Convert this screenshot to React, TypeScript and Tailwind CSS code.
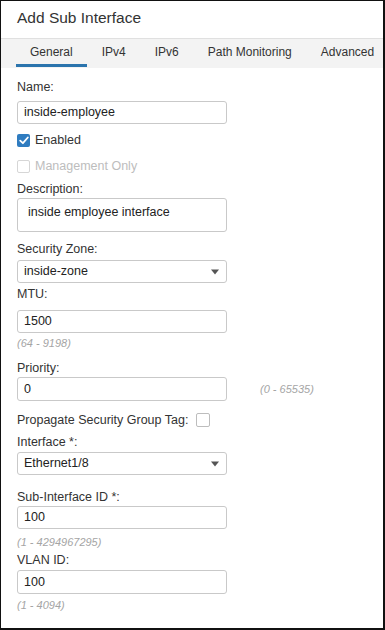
import React from "react";

const Label = ({ children, className = "" }: { children: React.ReactNode; className?: string }) => (
  <div className={`h-[16px] leading-[16px] text-[12.5px] text-[#333] ${className}`}>{children}</div>
);

const Input = ({ value, className = "" }: { value: string; className?: string }) => (
  <div
    className={`w-[210px] h-[23px] border border-[#c9c9c9] rounded-[3px] bg-white flex items-center px-[6px] text-[12.5px] text-[#222] ${className}`}
  >
    {value}
  </div>
);

const Select = ({ value, className = "" }: { value: string; className?: string }) => (
  <div
    className={`w-[210px] h-[23px] border border-[#c9c9c9] rounded-[3px] bg-white flex items-center justify-between pl-[6px] pr-[6px] text-[12.5px] text-[#222] ${className}`}
  >
    <span>{value}</span>
    <svg width="8" height="6" viewBox="0 0 8 6" className="mr-[1px]">
      <path d="M0 0.5 L8 0.5 L4 5.5 Z" fill="#555" />
    </svg>
  </div>
);

const Hint = ({ children, className = "" }: { children: React.ReactNode; className?: string }) => (
  <div className={`h-[14px] leading-[14px] text-[11px] italic text-[#a5a5a5] ${className}`}>{children}</div>
);

const tabs = ["General", "IPv4", "IPv6", "Path Monitoring", "Advanced"];

export default function App() {
  return (
    <div
      className="w-[385px] h-[630px] bg-white border-l border-t border-r-2 border-b-2 border-[#111] overflow-hidden flex flex-col"
      style={{ fontFamily: "'Liberation Sans', Arial, Helvetica, sans-serif" }}
    >
      <div className="h-[37px] flex items-center pl-[16px] pb-[3px] text-[15.5px] text-[#333]">Add Sub Interface</div>
      <div className="h-[30px] bg-[#f3f3f3] border-t border-[#e0e0e0] flex pl-[15px] gap-[1px] whitespace-nowrap">
        {tabs.map((t, i) => (
          <div
            key={t}
            className={`px-[14px] flex items-center text-[12px] text-[#333] mb-[1px] border-b-[3px] ${
              i === 0 ? "border-[#2b74ad]" : "border-transparent"
            }`}
          >
            {t}
          </div>
        ))}
      </div>

      <div className="flex flex-col pl-[16px]">
        <Label className="mt-[11px]">Name:</Label>
        <Input value="inside-employee" className="mt-[6px]" />

        <div className="mt-[8px] h-[16px] flex items-center gap-[5px]">
          <div className="w-[13px] h-[13px] rounded-[2px] bg-[#2f7cc0] flex items-center justify-center">
            <svg width="10" height="9" viewBox="0 0 10 9">
              <path d="M1.2 4.6 L3.9 7.2 L8.8 1.5" stroke="white" strokeWidth="1.8" fill="none" strokeLinecap="round" strokeLinejoin="round" />
            </svg>
          </div>
          <span className="text-[12.5px] text-[#333]">Enabled</span>
        </div>

        <div className="mt-[10px] h-[16px] flex items-center gap-[5px]">
          <div className="w-[13px] h-[13px] rounded-[2px] border border-[#d6d6d6] bg-white" />
          <span className="text-[12.5px] text-[#bdbdbd]">Management Only</span>
        </div>

        <Label className="mt-[7px]">Description:</Label>
        <div className="mt-[1px] w-[210px] h-[34px] border border-[#c9c9c9] rounded-[3px] pl-[10px] pt-[5px] text-[12.5px] text-[#222] leading-[16px]">
          inside employee interface
        </div>

        <Label className="mt-[9px]">Security Zone:</Label>
        <Select value="inside-zone" className="mt-[3px]" />

        <Label className="mt-[3px]">MTU:</Label>
        <Input value="1500" className="mt-[8px]" />
        <Hint className="mt-[3px]">(64 - 9198)</Hint>

        <Label className="mt-[10px]">Priority:</Label>
        <div className="mt-[1px] flex items-center">
          <Input value="0" className="h-[24px]" />
          <Hint className="ml-[33px]">(0 - 65535)</Hint>
        </div>

        <div className="mt-[11px] h-[16px] flex items-center">
          <span className="text-[12.5px] text-[#333]">Propagate Security Group Tag:</span>
          <div className="ml-[8px] w-[14px] h-[14px] rounded-[2px] border border-[#bdbdbd] bg-white" />
        </div>

        <Label className="mt-[6px]">Interface *:</Label>
        <Select value="Ethernet1/8" className="mt-[2px]" />

        <Label className="mt-[14px]">Sub-Interface ID *:</Label>
        <Input value="100" className="mt-[1px]" />
        <Hint className="mt-[6px]">(1 - 4294967295)</Hint>

        <Label className="mt-[3px]">VLAN ID:</Label>
        <Input value="100" className="mt-[2px] h-[24px]" />
        <Hint className="mt-[4px]">(1 - 4094)</Hint>
      </div>
    </div>
  );
}
